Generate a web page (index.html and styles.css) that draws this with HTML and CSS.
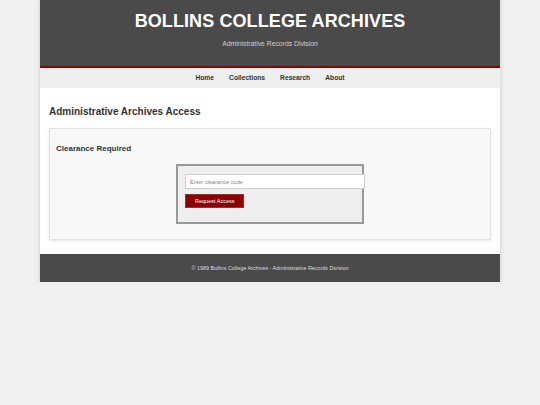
FILE: index.html
```html
<!DOCTYPE html>
<html lang="en">
<head>
<meta charset="utf-8">
<title>Bollins College Archives</title>
<link rel="stylesheet" href="styles.css">
</head>
<body>
<div class="page">
  <header class="site-header">
    <h1 class="site-title">BOLLINS COLLEGE ARCHIVES</h1>
    <p class="site-subtitle">Administrative Records Division</p>
  </header>
  <nav class="site-nav">
    <a href="#">Home</a>
    <a href="#">Collections</a>
    <a href="#">Research</a>
    <a href="#">About</a>
  </nav>
  <main class="content">
    <h2 class="page-title">Administrative Archives Access</h2>
    <section class="card">
      <h3 class="card-title">Clearance Required</h3>
      <form class="access-box">
        <input class="code-input" type="text" placeholder="Enter clearance code">
        <button class="access-btn" type="button">Request Access</button>
      </form>
    </section>
  </main>
  <footer class="site-footer">© 1989 Bollins College Archives - Administrative Records Division</footer>
</div>
</body>
</html>
```
FILE: styles.css
```css
html, body {
  margin: 0;
  padding: 0;
}

body {
  background: #f0f0f0;
  font-family: "Liberation Sans", Arial, sans-serif;
  color: #333;
}

.page {
  width: 460px;
  margin: 0 auto;
  background: #fff;
  box-shadow: 0 0 4px rgba(0, 0, 0, 0.18);
}

/* header */
.site-header {
  background: #4a4a4a;
  border-bottom: 2px solid #8b0000;
  padding: 10px 0 18px;
  text-align: center;
}

.site-title {
  margin: 0;
  font-size: 18px;
  line-height: 22px;
  font-weight: bold;
  letter-spacing: 0.1px;
  color: #fff;
}

.site-subtitle {
  margin: 8px 0 0;
  font-size: 6.8px;
  line-height: 8px;
  color: #cfcfcf;
}

/* navigation */
.site-nav {
  display: flex;
  justify-content: center;
  gap: 15px;
  height: 20px;
  background: #eeeeee;
}

.site-nav a {
  font-size: 6.7px;
  line-height: 20px;
  font-weight: bold;
  color: #333;
  text-decoration: none;
}

/* main content */
.content {
  padding: 18px 9px 14px;
}

.page-title {
  margin: 0 0 10px;
  font-size: 10px;
  line-height: 12px;
  font-weight: bold;
  color: #333;
}

.card {
  background: #f8f8f8;
  border: 1px solid #e2e2e2;
  box-shadow: 0 1px 3px rgba(0, 0, 0, 0.1);
  padding: 15px 6px;
}

.card-title {
  margin: 0 0 10px;
  font-size: 8px;
  line-height: 10px;
  font-weight: bold;
  color: #333;
}

.access-box {
  box-sizing: border-box;
  width: 188px;
  margin: 0 auto;
  background: #eeeeee;
  border: 2px solid #999;
  padding: 8px 7px 14px;
}

.code-input {
  display: block;
  width: 100%;
  height: 13px;
  margin: 0;
  padding: 0 4px;
  border: 1px solid #ccc;
  background: #fff;
  font-family: "Liberation Sans", Arial, sans-serif;
  font-size: 5.6px;
  color: #333;
  outline: none;
}

.code-input::placeholder {
  color: #888;
}

.access-btn {
  display: block;
  margin-top: 5px;
  height: 14px;
  padding: 0 9px;
  background: #8b0000;
  border: 1px solid #a52a2a;
  color: #fff;
  font-family: "Liberation Sans", Arial, sans-serif;
  font-size: 5.5px;
  line-height: 12px;
}

/* footer */
.site-footer {
  background: #4a4a4a;
  height: 28px;
  line-height: 28px;
  text-align: center;
  font-size: 5.4px;
  color: #ddd;
}
```
